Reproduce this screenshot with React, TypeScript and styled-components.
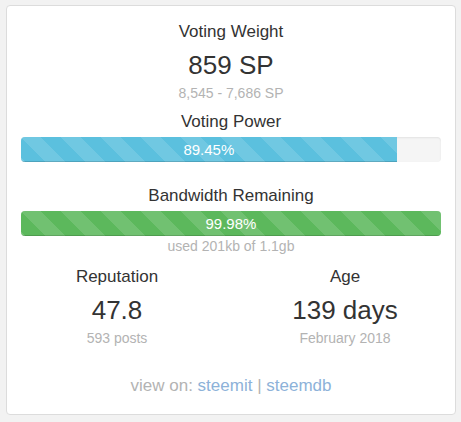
import React from "react";
import styled, { createGlobalStyle } from "styled-components";

const GlobalStyle = createGlobalStyle`
  html, body {
    margin: 0;
    padding: 0;
    background: #f2f2f2;
  }
  body {
    font-family: "Liberation Sans", Arial, sans-serif;
    color: #333;
  }
`;

const Page = styled.div`
  padding: 5px 0 0 6px;
`;

const Card = styled.div`
  box-sizing: border-box;
  width: 450px;
  height: 410px;
  background: #fff;
  border: 1px solid #dcdcdc;
  border-radius: 4px;
  padding: 16px 14px 0;
  text-align: center;
  overflow: hidden;
`;

const Title = styled.div<{ $gap?: number }>`
  font-size: 17px;
  line-height: 20px;
  color: #333;
  margin-top: ${(p) => p.$gap ?? 0}px;
`;

const Big = styled.div<{ $gap?: number }>`
  font-size: 26px;
  line-height: 30px;
  color: #333;
  margin-top: ${(p) => p.$gap ?? 0}px;
`;

const Muted = styled.div<{ $gap?: number }>`
  font-size: 14px;
  line-height: 18px;
  color: #b3b3b3;
  margin-top: ${(p) => p.$gap ?? 0}px;
`;

const Progress = styled.div<{ $gap?: number }>`
  height: 25px;
  margin-top: ${(p) => p.$gap ?? 0}px;
  background: #f5f5f5;
  border-radius: 4px;
  box-shadow: inset 0 1px 2px rgba(0, 0, 0, 0.08);
  overflow: hidden;
  display: flex;
`;

const Bar = styled.div<{ $color: string }>`
  height: 100%;
  background-color: ${(p) => p.$color};
  background-image: linear-gradient(
    45deg,
    rgba(255, 255, 255, 0.13) 25%,
    transparent 25%,
    transparent 50%,
    rgba(255, 255, 255, 0.13) 50%,
    rgba(255, 255, 255, 0.13) 75%,
    transparent 75%,
    transparent
  );
  background-size: 40px 40px;
  box-shadow: inset 0 -1px 0 rgba(0, 0, 0, 0.15);
  color: #fff;
  font-size: 15px;
  line-height: 25px;
  text-align: center;
`;

const Stats = styled.div`
  display: grid;
  grid-template-columns: 1fr 1fr;
  margin: 12px -18px 0;
`;

const Stat = styled.div`
  text-align: center;
`;

const Footer = styled.div`
  margin-top: 29px;
  font-size: 17px;
  line-height: 20px;
  color: #b3b3b3;
`;

const Link = styled.a`
  color: #8db2d9;
  text-decoration: none;
`;

export default function App() {
  const power = 89.45;
  const bandwidth = 99.98;
  return (
    <>
      <GlobalStyle />
      <Page>
        <Card>
          <Title>Voting Weight</Title>
          <Big $gap={8}>859 SP</Big>
          <Muted $gap={4}>8,545 - 7,686 SP</Muted>
          <Title $gap={10}>Voting Power</Title>
          <Progress $gap={5}>
            <Bar $color="#5bc0de" style={{ width: `${power}%` }}>
              {power.toFixed(2)}%
            </Bar>
          </Progress>
          <Title $gap={24}>Bandwidth Remaining</Title>
          <Progress $gap={5}>
            <Bar $color="#5cb85c" style={{ width: `${bandwidth}%` }}>
              {bandwidth.toFixed(2)}%
            </Bar>
          </Progress>
          <Muted $gap={1}>used 201kb of 1.1gb</Muted>
          <Stats>
            <Stat>
              <Title>Reputation</Title>
              <Big $gap={8}>47.8</Big>
              <Muted $gap={4}>593 posts</Muted>
            </Stat>
            <Stat>
              <Title>Age</Title>
              <Big $gap={8}>139 days</Big>
              <Muted $gap={4}>February 2018</Muted>
            </Stat>
          </Stats>
          <Footer>
            view on: <Link href="#">steemit</Link> | <Link href="#">steemdb</Link>
          </Footer>
        </Card>
      </Page>
    </>
  );
}
